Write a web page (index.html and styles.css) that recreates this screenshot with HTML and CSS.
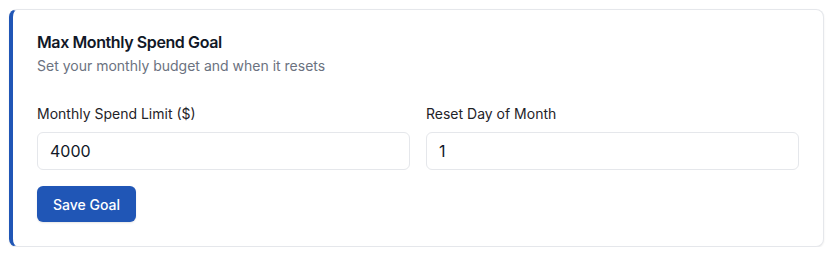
FILE: index.html
```html
<!DOCTYPE html>
<html>
<head>
<meta charset="utf-8">
<link rel="stylesheet" href="styles.css">
</head>
<body>
<div class="card">
  <div class="header">
    <h2 class="title">Max Monthly Spend Goal</h2>
    <p class="subtitle">Set your monthly budget and when it resets</p>
  </div>
  <div class="fields">
    <div class="field">
      <label class="label">Monthly Spend Limit ($)</label>
      <input class="input" type="text" value="4000">
    </div>
    <div class="field">
      <label class="label">Reset Day of Month</label>
      <input class="input" type="text" value="1">
    </div>
  </div>
  <button class="btn">Save Goal</button>
</div>
</body>
</html>
```
FILE: styles.css
```css
* { box-sizing: border-box; }
body {
  margin: 0;
  padding: 9px 8px 0 9px;
  background: #ffffff;
  font-family: Inter, "Noto Sans", sans-serif;
}
.card {
  width: 815px;
  border: 1px solid #e5e7eb;
  border-left: 4px solid #2056b6;
  border-radius: 8px;
  box-shadow: 0 1px 2px rgba(0,0,0,0.08);
  padding: 20px 24px 24px 24px;
  background: #fff;
}
.header { margin-bottom: 28px; }
.title {
  margin: 0;
  font-size: 16px;
  line-height: 24px;
  font-weight: 600;
  letter-spacing: -0.025em;
  color: #111827;
}
.subtitle {
  margin: 2px 0 0 0;
  font-size: 14px;
  line-height: 20px;
  color: #6b7280;
}
.fields {
  display: grid;
  grid-template-columns: 1fr 1fr;
  gap: 16px;
  margin-bottom: 16px;
}
.field { display: flex; flex-direction: column; }
.label {
  font-size: 14px;
  line-height: 20px;
  font-weight: 400;
  color: #1f2328;
  margin-bottom: 8px;
}
.input {
  height: 38px;
  border: 1px solid #e5e7eb;
  border-radius: 6px;
  padding: 0 12px;
  font-family: Inter, "Noto Sans", sans-serif;
  font-size: 16px;
  color: #111827;
  background: #fff;
  outline: none;
}
.btn {
  display: block;
  height: 36px;
  padding: 0 16px;
  border: none;
  border-radius: 6px;
  background: #2056b6;
  color: #fff;
  font-family: Inter, "Noto Sans", sans-serif;
  font-size: 14px;
  font-weight: 500;
  box-shadow: 0 1px 2px rgba(0,0,0,0.1);
}
```
